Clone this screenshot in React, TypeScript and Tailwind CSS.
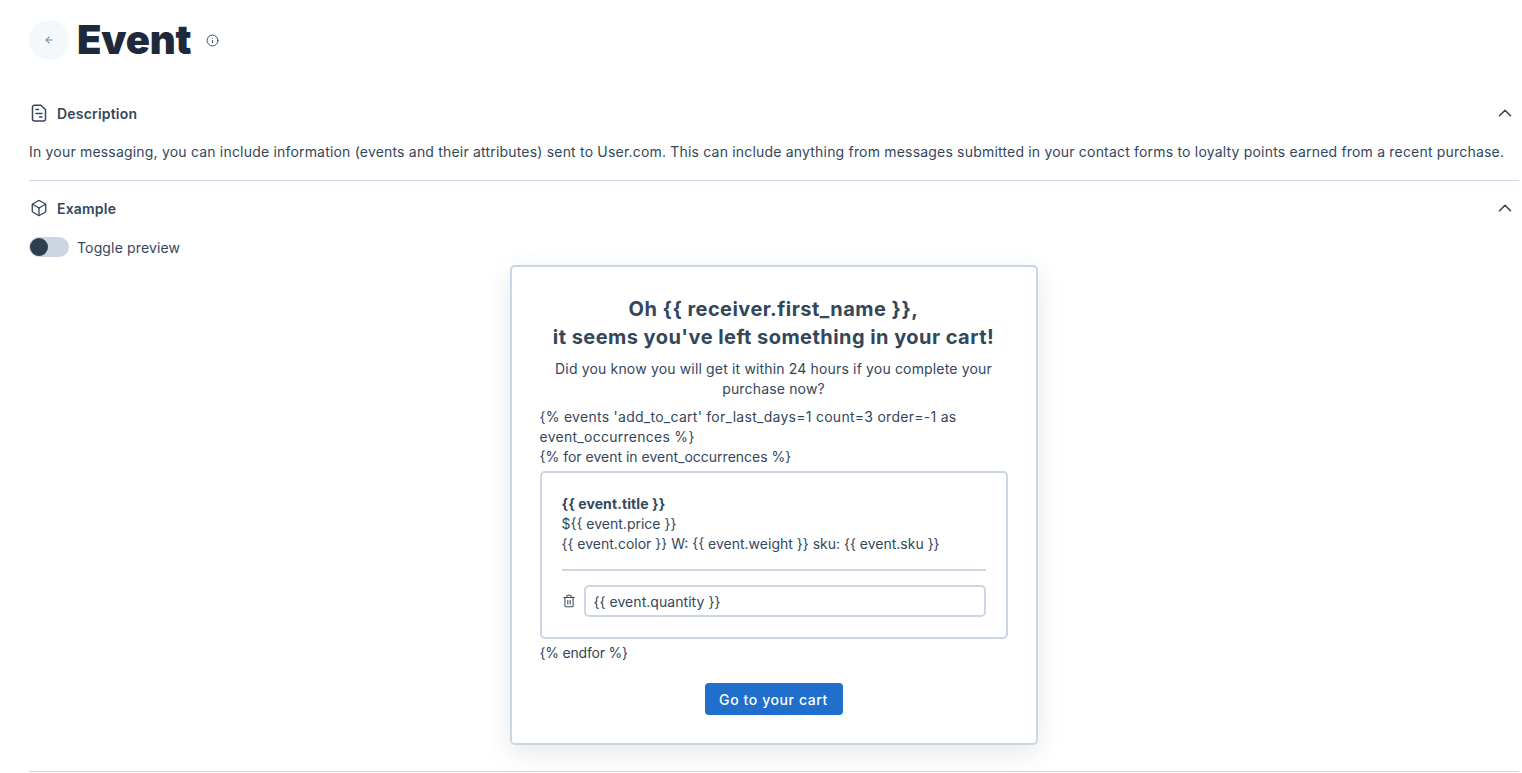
import { ArrowLeft, Box, ChevronUp, Info, Trash2 } from 'lucide-react'
import type { ReactNode } from 'react'

function DocIcon() {
  return (
    <svg width="18" height="18" viewBox="0 0 18 18" fill="none" stroke="#33475b" strokeWidth="1.5" strokeLinejoin="round" strokeLinecap="round">
      <path d="M4.5 1.25h6.5L15.5 5.75v9.25a2 2 0 0 1-2 2h-9a2 2 0 0 1-2-2V3.25a2 2 0 0 1 2-2z" />
      <path d="M6 5.5h2.5M6 9.5h6M9.5 13h2.5" />
    </svg>
  )
}

function SectionHeader({ icon, title }: { icon: ReactNode; title: string }) {
  return (
    <div className="flex h-[28px] items-center justify-between pr-[3px]">
      <div className="flex items-center gap-[8px]">
        <span className="flex w-[20px] justify-center">{icon}</span>
        <span className="text-[14px] font-semibold tracking-[0.2px] text-[#33475b]">{title}</span>
      </div>
      <ChevronUp size={22} strokeWidth={1.75} className="text-[#33475b]" />
    </div>
  )
}

export default function App() {
  return (
    <div className="h-[773px] overflow-hidden bg-white pl-[29px] pr-[3px] font-['Inter',sans-serif] text-[14px] text-[#33475b]">
      <header className="flex h-[80px] items-center">
        <button
          type="button"
          className="flex h-[40px] w-[40px] items-center justify-center rounded-full bg-[#f5f8fa]"
        >
          <ArrowLeft size={10} strokeWidth={2.5} className="text-[#5c85ad]" />
        </button>
        <h1 className="ml-[8px] text-[40px] leading-none font-black tracking-[-0.2px] text-[#1e2a3b]">
          Event
        </h1>
        <Info size={13} strokeWidth={1.75} className="ml-[15px] text-[#33475b]" />
      </header>

      <section className="h-[101px] border-b border-[#cbd6e2] pt-[19px]">
        <SectionHeader icon={<DocIcon />} title="Description" />
        <p className="mt-[15px] leading-[20px] tracking-[0.19px] whitespace-nowrap">
          In your messaging, you can include information (events and their attributes) sent to
          User.com. This can include anything from messages submitted in your contact forms to
          loyalty points earned from a recent purchase.
        </p>
      </section>

      <section className="h-[591px] border-b border-[#cbd6e2] pt-[13px]">
        <SectionHeader
          icon={<Box size={18} strokeWidth={1.75} className="text-[#33475b]" />}
          title="Example"
        />
        <div className="mt-[15px] flex h-[20px] items-center gap-[8px]">
          <div className="flex h-[20px] w-[40px] items-center rounded-full bg-[#cbd6e2] pl-[1px]">
            <span className="h-[18px] w-[18px] rounded-full bg-[#2d3e50]" />
          </div>
          <span className="tracking-[0.15px]">Toggle preview</span>
        </div>

        <div className="mt-[8px] flex justify-center">
          <div className="ml-[-1px] h-[480px] w-[528px] rounded-[5px] border-2 border-[#cbd6e2] bg-white px-[28px] pt-[28px] shadow-[0_8px_24px_rgba(45,62,80,0.12)]">
            <h2 className="text-center text-[20px] leading-[28px] font-bold tracking-[0.45px]">
              Oh {'{{'} receiver.first_name {'}}'},
              <br />
              it seems you've left something in your cart!
            </h2>
            <p className="mt-[8px] px-[10px] text-center leading-[20px] tracking-[0.16px]">
              Did you know you will get it within 24 hours if you complete your purchase now?
            </p>
            <p className="mt-[8px] leading-[20px]">
              <span className="tracking-[0.27px]">
                {"{% events 'add_to_cart' for_last_days=1 count=3 order=-1 as event_occurrences %}"}
              </span>
              <br />
              {'{% for event in event_occurrences %}'}
            </p>
            <div className="mt-[4px] h-[168px] rounded-[5px] border-2 border-[#cbd6e2] px-[20px] pt-[21px]">
              <p className="leading-[20px]">
                <strong className="font-bold tracking-[0.1px]">{'{{ event.title }}'}</strong>
                <br />
                {'${{ event.price }}'}
                <br />
                {'{{ event.color }} W: {{ event.weight }} sku: {{ event.sku }}'}
              </p>
              <div className="mt-[15px] border-t-2 border-[#cbd6e2]" />
              <div className="mt-[14px] flex items-center gap-[8px]">
                <Trash2 size={14} strokeWidth={1.75} className="shrink-0" />
                <div className="flex h-[32px] flex-1 items-center rounded-[5px] border-2 border-[#cbd6e2] px-[8px] tracking-[0.05px]">
                  {'{{ event.quantity }}'}
                </div>
              </div>
            </div>
            <p className="mt-[4px] leading-[20px] tracking-[-0.2px]">{'{% endfor %}'}</p>
            <div className="mt-[20px] flex justify-center">
              <button
                type="button"
                className="h-[32px] w-[138px] rounded-[4px] bg-[#216fcc] font-medium tracking-[0.6px] text-white"
              >
                Go to your cart
              </button>
            </div>
          </div>
        </div>
      </section>
    </div>
  )
}
